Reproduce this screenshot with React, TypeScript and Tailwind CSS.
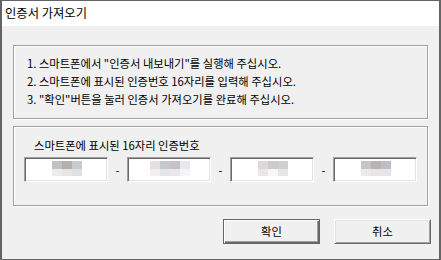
const font = { fontFamily: '"Noto Sans CJK KR", "Noto Sans", sans-serif' };

// blurred (masked) digits in each box: top row / bottom row colours
const masks = [
  { offset: "ml-[27px]", top: ["bg-[#c4c0c0]", "bg-[#b5b0ae]", "bg-[#c7cace]"], bottom: ["bg-[#ececec]", "bg-[#e6e6e6]", "bg-[#e0e0e0]"] },
  { offset: "ml-[22px]", top: ["bg-[#e5e0e0]", "bg-[#c6c9cc]", "bg-[#c8c2c4]", "bg-[#e8e8ea]"], bottom: ["bg-[#f0eeee]", "bg-[#e6e6e6]", "bg-[#e8e8ea]", "bg-[#f5f5f7]"] },
  { offset: "ml-[27px]", top: ["bg-[#dcd8d8]", "bg-[#cbcbcd]", "bg-[#cfcfcf]"], bottom: ["bg-[#e8e6e6]", "bg-[#f5f6f6]", "bg-[#e6e6e6]"] },
  { offset: "ml-[27px]", top: ["bg-[#c9c4c4]", "bg-[#b8b4b4]", "bg-[#bcbfc4]"], bottom: ["bg-[#ebe9e9]", "bg-[#e6e6e6]", "bg-[#e6e6e8]"] },
];

function CodeBox({ mask }: { mask: (typeof masks)[number] }) {
  return (
    <div className="w-[84px] h-[25px] bg-white border border-t-[#a0a0a0] border-l-[#a0a0a0] border-b-white border-r-white shadow-[inset_1px_1px_0_#696969,inset_-1px_-1px_0_#e3e3e3] flex flex-col pt-[3px]">
      <div className={`flex flex-col ${mask.offset}`}>
        <div className="flex">
          {mask.top.map((c, i) => (
            <div key={i} className={`w-[10px] h-[8px] ${c}`} />
          ))}
        </div>
        <div className="flex">
          {mask.bottom.map((c, i) => (
            <div key={i} className={`w-[10px] h-[7px] ${c}`} />
          ))}
        </div>
      </div>
    </div>
  );
}

export default function App() {
  return (
    <div
      className="w-[441px] h-[260px] flex flex-col border-y border-x-2 border-[#646464] bg-[#f0f0f0] text-black text-[11.3px]"
      style={font}
    >
      {/* Title bar */}
      <div className="h-[25px] bg-white flex items-center pl-[3px] text-[12.3px]">
        인증서 가져오기
      </div>

      <div className="flex flex-col pl-[11px] pt-[19px]">
        {/* Instructions */}
        <div className="w-[415px] h-[74px] border border-[#a0a0a0] shadow-[1px_1px_0_#fff,inset_1px_1px_0_#fff] pl-[13px] pt-[8px] leading-[18px]">
          <p>1. 스마트폰에서 "인증서 내보내기"를 실행해 주십시오.</p>
          <p>2. 스마트폰에 표시된 인증번호 16자리를 입력해 주십시오.</p>
          <p>3. "확인"버튼을 눌러 인증서 가져오기를 완료해 주십시오.</p>
        </div>

        {/* Code input */}
        <div className="mt-[7px] w-[415px] h-[80px] border border-[#a0a0a0] shadow-[1px_1px_0_#fff,inset_1px_1px_0_#fff] pl-[10px] pt-[9px] leading-[18px]">
          <p className="ml-[10px]">스마트폰에 표시된 16자리 인증번호</p>
          <div className="mt-[3px] flex items-center">
            {masks.map((m, i) => (
              <div key={i} className="flex items-center">
                {i > 0 && <span className="w-[19px] text-center">-</span>}
                <CodeBox mask={m} />
              </div>
            ))}
          </div>
        </div>

        {/* Buttons */}
        <div className="mt-[13px] flex justify-end gap-[14px] pr-[8px]">
          <button className="w-[97px] h-[25px] bg-[#f0f0f0] border border-[#646464] shadow-[inset_1px_1px_0_#fff,inset_-1px_-1px_0_#696969,inset_-2px_-2px_0_#a0a0a0] text-[11.3px]">
            확인
          </button>
          <button className="w-[97px] h-[25px] bg-[#f0f0f0] border border-t-white border-l-white border-r-[#696969] border-b-[#696969] shadow-[inset_1px_1px_0_#e3e3e3,inset_-1px_-1px_0_#a0a0a0] text-[11.3px]">
            취소
          </button>
        </div>
      </div>
    </div>
  );
}
